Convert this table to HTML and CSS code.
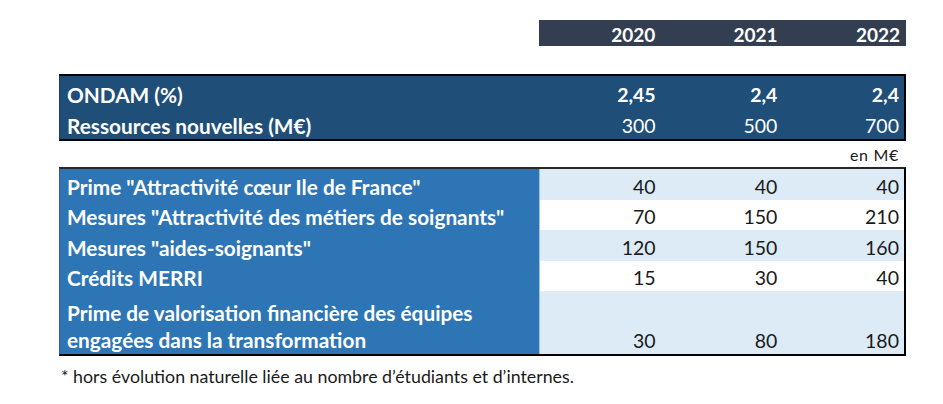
FILE: index.html
```html
<!DOCTYPE html>
<html lang="fr">
<head>
<meta charset="utf-8">
<title>ONDAM</title>
<link rel="stylesheet" href="styles.css">
</head>
<body>
<div class="page">
  <div class="years">
    <div class="yr">2020</div>
    <div class="yr">2021</div>
    <div class="yr">2022</div>
  </div>

  <div class="summary">
    <div class="row srow">
      <div class="label">ONDAM (%)</div>
      <div class="val b">2,45</div>
      <div class="val b">2,4</div>
      <div class="val b">2,4</div>
    </div>
    <div class="row srow">
      <div class="label">Ressources nouvelles (M€)</div>
      <div class="val">300</div>
      <div class="val">500</div>
      <div class="val">700</div>
    </div>
  </div>

  <div class="unit">en M€</div>

  <div class="measures">
    <div class="row mrow h31 shade">
      <div class="label">Prime "Attractivité cœur Ile de France"</div>
      <div class="val first">40</div>
      <div class="val">40</div>
      <div class="val">40</div>
    </div>
    <div class="row mrow h30">
      <div class="label">Mesures "Attractivité des métiers de soignants"</div>
      <div class="val first">70</div>
      <div class="val">150</div>
      <div class="val">210</div>
    </div>
    <div class="row mrow h31 shade">
      <div class="label">Mesures "aides-soignants"</div>
      <div class="val first">120</div>
      <div class="val">150</div>
      <div class="val">160</div>
    </div>
    <div class="row mrow h30">
      <div class="label">Crédits MERRI</div>
      <div class="val first">15</div>
      <div class="val">30</div>
      <div class="val">40</div>
    </div>
    <div class="row mrow h63 shade">
      <div class="label multi"><span class="lines">Prime de valorisation financière des équipes<br>engagées dans la transformation</span></div>
      <div class="val first">30</div>
      <div class="val">80</div>
      <div class="val">180</div>
    </div>
  </div>

  <p class="note">* hors évolution naturelle liée au nombre d’étudiants et d’internes.</p>
</div>
</body>
</html>
```

FILE: styles.css
```css
html, body {
  margin: 0;
  padding: 0;
  background: #ffffff;
}

body {
  font-family: Lato, "Noto Sans", "Liberation Sans", sans-serif;
  color: #1a1a1a;
}

.page {
  padding: 20px 0 0 59px;
  width: 847px;
}

.years {
  margin-left: 480px;
  height: 26px;
  background: #333f50;
  display: grid;
  grid-template-columns: repeat(3, 1fr);
  align-items: end;
  color: #ffffff;
  font-weight: 700;
  font-size: 19px;
}

.yr {
  text-align: right;
  padding-right: 6px;
}

.summary {
  margin-top: 28px;
  background: #1f4e79;
  border: 2px solid #000000;
  border-left: 1px solid #1c3d5e;
  color: #ffffff;
}

.row {
  display: grid;
  grid-template-columns: 479px repeat(3, 1fr);
  align-items: end;
  font-size: 19.5px;
}

.srow {
  height: 31.5px;
}

.label {
  font-weight: 700;
  font-size: 20.8px;
  padding: 0 0 1px 7px;
  color: #ffffff;
  white-space: nowrap;
}

.val {
  text-align: right;
  padding: 0 5px 2px 0;
}

.val.b {
  font-weight: 700;
}

.unit {
  height: 26px;
  font-size: 16px;
  letter-spacing: 0.7px;
  padding-right: 7px;
  display: flex;
  align-items: center;
  justify-content: flex-end;
  color: #1a1a1a;
}

.measures {
  border: 2px solid #000000;
  border-top-color: #262626;
  border-left: 1px solid #2a5f92;
}

.mrow .label {
  background: #2e75b6;
  align-self: stretch;
  display: flex;
  align-items: flex-end;
}

.mrow .val {
  align-self: stretch;
  display: flex;
  align-items: flex-end;
  justify-content: flex-end;
  color: #1a1a1a;
}

.mrow.shade .val {
  background: #ddebf7;
}

.mrow .val.first {
  border-left: 1px solid #9dc3e6;
}

.h31 { height: 31px; }
.h30 { height: 30px; }
.h63 { height: 63px; }

.lines {
  display: block;
  line-height: 26.5px;
}

.note {
  margin: 9px 0 0 2px;
  font-size: 17.8px;
  color: #1a1a1a;
}
```
